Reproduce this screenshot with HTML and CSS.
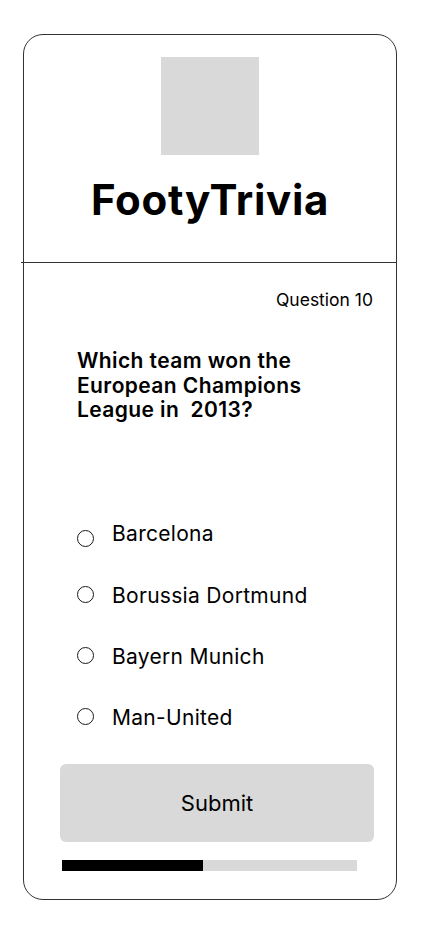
FILE: index.html
```html
<!DOCTYPE html>
<html lang="en">
<head>
<meta charset="utf-8">
<title>FootyTrivia</title>
<link rel="stylesheet" href="styles.css">
</head>
<body>
<main class="card">
  <header class="header">
    <div class="logo"></div>
    <h1 class="title">FootyTrivia</h1>
  </header>
  <div class="divider"></div>
  <p class="meta">Question 10</p>
  <h2 class="question">Which team won the European Champions League in&nbsp; 2013?</h2>
  <ul class="options">
    <li class="option"><span class="radio radio--low"></span><span class="label">Barcelona</span></li>
    <li class="option"><span class="radio"></span><span class="label">Borussia Dortmund</span></li>
    <li class="option"><span class="radio"></span><span class="label">Bayern Munich</span></li>
    <li class="option"><span class="radio"></span><span class="label">Man-United</span></li>
  </ul>
  <button class="submit" type="button">Submit</button>
  <div class="progress"><div class="progress-fill" style="width: 141px"></div></div>
</main>
</body>
</html>
```

FILE: styles.css
```css
* { box-sizing: border-box; }
html, body { margin: 0; padding: 0; background: #fff; }
body {
  font-family: Inter, "Noto Sans", "Liberation Sans", sans-serif;
  color: #000;
}
.card {
  width: 374px;
  height: 866px;
  margin: 34px 0 0 23px;
  border: 1px solid #333;
  border-radius: 20px;
  display: flex;
  flex-direction: column;
}
.header {
  padding-top: 22px;
  display: flex;
  flex-direction: column;
  align-items: center;
}
.logo {
  width: 98px;
  height: 98px;
  background: #d9d9d9;
}
.title {
  margin: 21px 0 0;
  font-size: 42px;
  line-height: 48px;
  font-weight: 700;
  letter-spacing: 0.7px;
}
.divider {
  height: 1px;
  background: #333;
  margin: 38px 0 0 -3px;
  width: calc(100% + 3px);
}
.meta {
  margin: 26px 0 0;
  padding-right: 23px;
  text-align: right;
  font-size: 17.5px;
  line-height: 21px;
}
.question {
  margin: 39px 0 0 53px;
  width: 260px;
  font-size: 21px;
  line-height: 24.5px;
  font-weight: 600;
  letter-spacing: 0.4px;
}
.options {
  list-style: none;
  margin: 99px 0 0 53px;
  padding: 0;
  display: flex;
  flex-direction: column;
  gap: 37px;
}
.option {
  display: flex;
  align-items: flex-start;
  gap: 18px;
  font-size: 21px;
  line-height: 24px;
  letter-spacing: 0.3px;
}
.radio {
  width: 17px;
  height: 17px;
  margin-top: 2px;
  border: 1.4px solid #1a1a1a;
  border-radius: 50%;
  flex: none;
}
.radio--low { margin-top: 8px; }
.submit {
  margin: 34px 0 0 36px;
  width: 314px;
  height: 78px;
  border: 0;
  border-radius: 6px;
  background: #d9d9d9;
  font-family: inherit;
  font-size: 22px;
  color: #000;
  padding: 0;
}
.progress {
  margin: 18px 0 0 38px;
  width: 295px;
  height: 11px;
  background: #d9d9d9;
}
.progress-fill {
  height: 100%;
  background: #000;
}
```
